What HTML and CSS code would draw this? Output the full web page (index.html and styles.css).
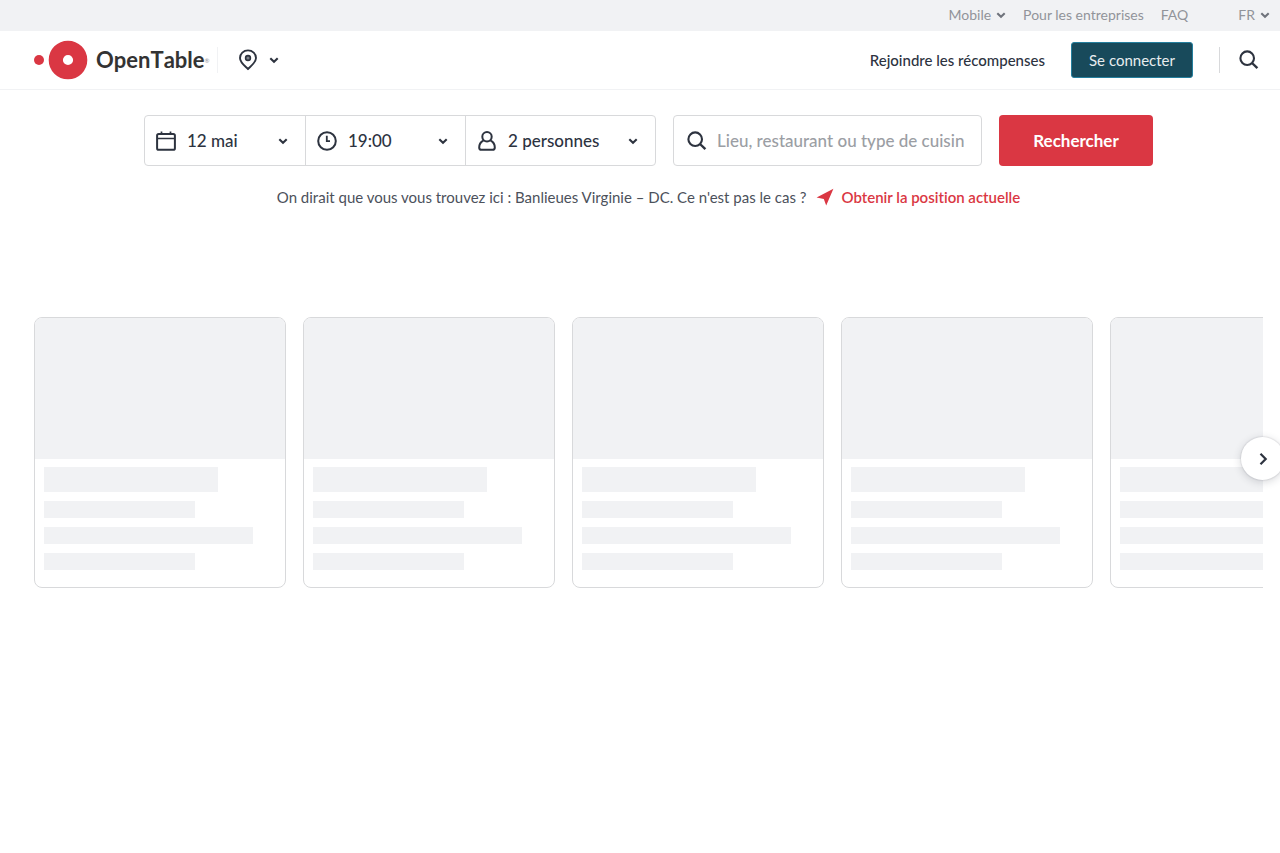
FILE: index.html
```html
<!DOCTYPE html>
<html lang="fr">
<head>
	<meta charset="utf-8">
	<meta name="viewport" content="width=device-width, initial-scale=1">
	<title>OpenTable</title>
	<link rel="stylesheet" href="styles.css">
</head>
<body>
	<svg class="symbols" aria-hidden="true">
		<symbol id="chevron" viewBox="0 0 10 10">
			<path d="M1.3 3.2 L5 6.7 L8.7 3.2" fill="none" stroke="currentColor" stroke-width="2.1" />
		</symbol>
		<symbol id="search" viewBox="0 0 20 20">
			<circle cx="8.2" cy="8.2" r="6.8" fill="none" stroke="currentColor" stroke-width="2.1" />
			<path d="M13 13 L18.4 18.2" fill="none" stroke="currentColor" stroke-width="2.4" />
		</symbol>
	</svg>

	<div class="topbar">
		<button type="button" class="topbar_item">Mobile <svg class="chevron"><use href="#chevron" /></svg></button>
		<a class="topbar_item" href="#">Pour les entreprises</a>
		<a class="topbar_item" href="#">FAQ</a>
		<button type="button" class="topbar_item language">FR <svg class="chevron"><use href="#chevron" /></svg></button>
	</div>

	<header class="header">
		<a class="logo" href="#">
			<svg class="logo_mark" viewBox="0 0 54 40" aria-hidden="true">
				<circle cx="5" cy="20" r="5" fill="#da3743" />
				<circle cx="34" cy="20" r="12.2" fill="none" stroke="#da3743" stroke-width="14.2" />
			</svg>
			<span class="logo_name">OpenTable</span><span class="logo_reg">®</span>
		</a>
		<button type="button" class="location" aria-label="Lieu">
			<svg class="pin" viewBox="0 0 20 22">
				<path d="M10 20 C7.5 17.4 2 13.6 2 8.9 C2 4.7 5.5 1.4 10 1.4 C14.5 1.4 18 4.7 18 8.9 C18 13.6 12.5 17.4 10 20 Z" fill="none" stroke="currentColor" stroke-width="1.9" />
				<circle cx="10" cy="9" r="2.4" fill="#7d828a" stroke="currentColor" stroke-width="1.6" />
			</svg>
			<svg class="chevron"><use href="#chevron" /></svg>
		</button>
		<div class="account">
			<a class="rewards" href="#">Rejoindre les récompenses</a>
			<button type="button" class="sign_in">Se connecter</button>
			<button type="button" class="header_search" aria-label="Rechercher">
				<svg class="search_icon"><use href="#search" /></svg>
			</button>
		</div>
	</header>

	<main>
		<form class="search">
			<div class="pickers">
				<label class="picker">
					<svg class="picker_icon" viewBox="0 0 20 20">
						<rect x="1.1" y="3" width="17.8" height="15.8" rx="1.6" fill="none" stroke="currentColor" stroke-width="2" />
						<path d="M1 7.5 H19 M5.5 0.6 V3 M14.5 0.6 V3" fill="none" stroke="currentColor" stroke-width="1.7" />
					</svg>
					<select aria-label="Date"><option>12 mai</option></select>
					<svg class="chevron"><use href="#chevron" /></svg>
				</label>
				<label class="picker">
					<svg class="picker_icon" viewBox="0 0 20 20">
						<circle cx="10" cy="10" r="8.8" fill="none" stroke="currentColor" stroke-width="2" />
						<path d="M9.8 4.8 V10.2 H13" fill="none" stroke="currentColor" stroke-width="1.8" />
					</svg>
					<select aria-label="Heure"><option>19:00</option></select>
					<svg class="chevron"><use href="#chevron" /></svg>
				</label>
				<label class="picker party">
					<svg class="picker_icon" viewBox="0 0 20 20">
						<circle cx="10" cy="5.8" r="4.7" fill="none" stroke="currentColor" stroke-width="2" />
						<path d="M6.4 9.6 C3.6 11 2.2 13.2 2.2 16.4 C2.2 18 3 18.8 4.4 18.8 H15.6 C17 18.8 17.8 18 17.8 16.4 C17.8 13.2 16.4 11 13.6 9.6" fill="none" stroke="currentColor" stroke-width="2" />
					</svg>
					<select aria-label="Nombre de personnes"><option>2 personnes</option></select>
					<svg class="chevron"><use href="#chevron" /></svg>
				</label>
			</div>
			<label class="term">
				<svg class="search_icon"><use href="#search" /></svg>
				<input type="text" aria-label="Recherche" placeholder="Lieu, restaurant ou type de cuisine">
			</label>
			<button type="submit" class="submit">Rechercher</button>
		</form>

		<p class="position">
			<span>On dirait que vous vous trouvez ici : Banlieues Virginie – DC. Ce n'est pas le cas ?</span>
			<a class="position_link" href="#">
				<svg class="arrow" viewBox="0 0 18 18"><path d="M17.4 0.8 L10.2 17.4 L7.8 11 L0.6 9.4 Z" fill="currentColor" /></svg>
				Obtenir la position actuelle
			</a>
		</p>

		<section class="carousel">
			<div class="cards">
				<div class="card">
					<div class="photo"></div>
					<div class="lines"><div class="title"></div><div class="line"></div><div class="line wide"></div><div class="line"></div></div>
				</div>
				<div class="card">
					<div class="photo"></div>
					<div class="lines"><div class="title"></div><div class="line"></div><div class="line wide"></div><div class="line"></div></div>
				</div>
				<div class="card">
					<div class="photo"></div>
					<div class="lines"><div class="title"></div><div class="line"></div><div class="line wide"></div><div class="line"></div></div>
				</div>
				<div class="card">
					<div class="photo"></div>
					<div class="lines"><div class="title"></div><div class="line"></div><div class="line wide"></div><div class="line"></div></div>
				</div>
				<div class="card">
					<div class="photo"></div>
					<div class="lines"><div class="title"></div><div class="line"></div><div class="line wide"></div><div class="line"></div></div>
				</div>
			</div>
			<button type="button" class="next" aria-label="Suivant">
				<svg viewBox="0 0 16 16"><path d="M5.5 2.8 L10.7 8 L5.5 13.2" fill="none" stroke="currentColor" stroke-width="2.2" /></svg>
			</button>
		</section>
	</main>
</body>
</html>
```
FILE: styles.css
```css
* {
	box-sizing: border-box;
}
body {
	margin: 0;
	overflow-x: hidden;
	background-color: white;
	color: #2d333f;
	font-family: Lato, "Liberation Sans", sans-serif;
	font-size: 15px;
	font-variant-ligatures: none;
}
a {
	color: inherit;
	text-decoration: none;
}
button, input, select {
	margin: 0;
	padding: 0;
	border: 0;
	background: none;
	color: inherit;
	font: inherit;
}
button {
	cursor: pointer;
}
svg {
	display: block;
	flex: none;
}
.symbols {
	position: absolute;
	width: 0;
	height: 0;
}
.chevron {
	width: 10px;
	height: 10px;
}
.search_icon {
	width: 20px;
	height: 20px;
}

/* top bar */
.topbar {
	display: flex;
	justify-content: flex-end;
	align-items: center;
	gap: 17px;
	height: 31px;
	padding: 0 10px 2px;
	background-color: #f1f2f4;
	color: #91949a;
	font-size: 14px;
}
.topbar_item {
	display: flex;
	align-items: center;
	gap: 5px;
}
.topbar .chevron {
	color: #6f737b;
}
.language {
	margin-left: 33px;
}

/* header */
.header {
	display: flex;
	align-items: center;
	height: 59px;
	padding: 0 21px 0 34px;
	border-bottom: 1px solid #f1f2f4;
}
.logo {
	display: flex;
	align-items: center;
}
.logo_mark {
	width: 54px;
	height: 40px;
	margin-right: 8px;
}
.logo_name {
	padding-bottom: 2px;
	color: #333;
	font-size: 22px;
	font-weight: bold;
	font-kerning: none;
}
.logo_reg {
	color: #91949a;
	font-size: 6px;
}
.location {
	display: flex;
	align-items: center;
	gap: 11px;
	height: 26px;
	margin-left: 7px;
	padding-left: 20px;
	border-left: 1px solid #f1f2f4;
}
.pin {
	width: 20px;
	height: 22px;
}
.account {
	display: flex;
	align-items: center;
	margin-left: auto;
	padding-bottom: 1px;
}
.rewards {
	font-weight: 500;
}
.sign_in {
	width: 122px;
	height: 36px;
	margin: 0 26px;
	border: 1px solid #247f9e;
	border-radius: 3px;
	background-color: #184a5b;
	color: #e8edef;
}
.header_search {
	display: flex;
	align-items: center;
	height: 26px;
	padding-left: 19px;
	border-left: 1px solid #d8d9db;
}

/* search form */
main {
	padding: 25px 17px 0 34px;
}
.search {
	display: flex;
	gap: 17px;
	max-width: 1009px;
	margin: 0 auto;
	font-size: 17px;
	font-weight: 500;
}
.pickers, .term {
	display: flex;
	height: 51px;
	border: 1px solid #d8d9db;
	border-radius: 4px;
}
.pickers {
	flex: 0 1 512px;
}
.picker {
	display: flex;
	flex: 0 1 160px;
	align-items: center;
	min-width: 0;
	padding: 0 17px 0 11px;
}
.picker + .picker {
	border-left: 1px solid #d8d9db;
}
.picker.party {
	flex: 1 1 190px;
}
.picker_icon {
	width: 20px;
	height: 20px;
	margin-right: 11px;
}
.picker select {
	flex: 1;
	min-width: 0;
	appearance: none;
	outline: 0;
}
.term {
	flex: 1;
	align-items: center;
	min-width: 0;
	padding: 0 17px 0 13px;
}
.term input {
	flex: 1;
	min-width: 0;
	margin-left: 10px;
	outline: 0;
}
.term input::placeholder {
	color: #9b9ea4;
	opacity: 1;
}
.submit {
	flex: 0 0 154px;
	border-radius: 4px;
	background-color: #da3743;
	color: white;
	font-weight: bold;
}

.position {
	display: flex;
	justify-content: center;
	gap: 10px;
	margin: 21px 0 0;
	line-height: 20px;
	color: #4c515b;
}
.position_link {
	display: flex;
	align-items: center;
	gap: 7px;
	color: #da3743;
	font-weight: 600;
}
.arrow {
	width: 18px;
	height: 18px;
}

/* loading cards */
.carousel {
	position: relative;
	margin-top: 110px;
}
.cards {
	display: flex;
	gap: 17px;
	overflow: hidden;
}
.card {
	flex: 0 0 252px;
	overflow: hidden;
	border: 1px solid #d8d9db;
	border-radius: 8px;
}
.photo {
	height: 141px;
	background-color: #f1f2f4;
}
.lines {
	display: flex;
	flex-direction: column;
	gap: 9px;
	padding: 8px 9px 17px;
}
.title, .line {
	width: 65%;
	height: 17px;
	background-color: #f1f2f4;
}
.title {
	width: 75%;
	height: 25px;
}
.wide {
	width: 90%;
}
.next {
	position: absolute;
	top: 120px;
	right: -21px;
	display: flex;
	justify-content: center;
	align-items: center;
	width: 43px;
	height: 43px;
	border-radius: 50%;
	background-color: white;
	box-shadow: 0 0 1px 1px rgba(45, 51, 63, 0.08), 0 2px 8px rgba(45, 51, 63, 0.2);
}
.next svg {
	width: 16px;
	height: 16px;
}
```
